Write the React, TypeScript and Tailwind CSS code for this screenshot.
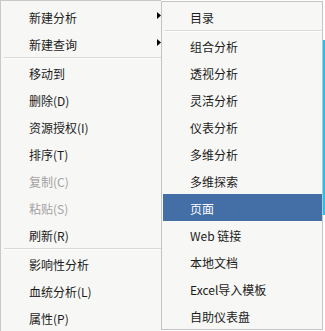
import React from "react";

type Item = { label: string; arrow?: boolean; disabled?: boolean; active?: boolean; sep?: boolean };

const MAIN: Item[] = [
	{ label: "新建分析", arrow: true },
	{ label: "新建查询", arrow: true },
	{ label: "", sep: true },
	{ label: "移动到" },
	{ label: "删除(D)" },
	{ label: "资源授权(I)" },
	{ label: "排序(T)" },
	{ label: "复制(C)", disabled: true },
	{ label: "粘贴(S)", disabled: true },
	{ label: "刷新(R)" },
	{ label: "", sep: true },
	{ label: "影响性分析" },
	{ label: "血统分析(L)" },
	{ label: "属性(P)" },
];

const SUB: Item[] = [
	{ label: "目录" },
	{ label: "", sep: true },
	{ label: "组合分析" },
	{ label: "透视分析" },
	{ label: "灵活分析" },
	{ label: "仪表分析" },
	{ label: "多维分析" },
	{ label: "多维探索" },
	{ label: "页面", active: true },
	{ label: "Web 链接" },
	{ label: "本地文档" },
	{ label: "Excel导入模板" },
	{ label: "自助仪表盘" },
];

function Row({ item }: { item: Item }) {
	if (item.sep) {
		return (
			<div className="h-[2px] ml-[2px] flex flex-col">
				<div className="h-[1px] bg-[#d9d9d7]" />
				<div className="h-[1px] bg-[#fdfdfc]" />
			</div>
		);
	}
	return (
		<div
			className={
				"h-[27px] pt-[3px] pl-[27px] flex items-center text-[12px] leading-none whitespace-nowrap " +
				(item.active ? "bg-[#446ea6] text-white" : item.disabled ? "text-[#a2a2a2]" : "text-[#1b1b1b]")
			}
		>
			<span>{item.label}</span>
			{item.arrow && (
				<svg width="4" height="7" viewBox="0 0 4 7" className="ml-auto self-start mt-[6px]">
					<polygon points="0,0 4,3.5 0,7" fill="#000" />
				</svg>
			)}
		</div>
	);
}

export default function App() {
	return (
		<div
			className="flex w-[325px] h-[331px] overflow-hidden bg-white"
			style={{ fontFamily: '"Noto Sans CJK SC", "Liberation Sans", sans-serif' }}
		>
			{/* main context menu */}
			<div className="w-[161px] h-[340px] shrink-0 bg-[#f7f7f5] border-l border-t border-[#c9c9c7] pt-[2px] pl-[1px]">
				{MAIN.map((item, i) => (
					<Row key={i} item={item} />
				))}
			</div>

			{/* submenu */}
			<div className="w-[162px] h-[329px] mt-[1px] shrink-0 bg-[#f7f7f5] border border-[#c4c4c2] pt-[1px] pl-[1px]">
				{SUB.map((item, i) => (
					<Row key={i} item={item} />
				))}
			</div>

			<div className="flex flex-col w-[2px]">
				<div className="h-[40px]" />
				<div className="h-[175px] bg-[#1cc4ec]" />
			</div>
		</div>
	);
}
